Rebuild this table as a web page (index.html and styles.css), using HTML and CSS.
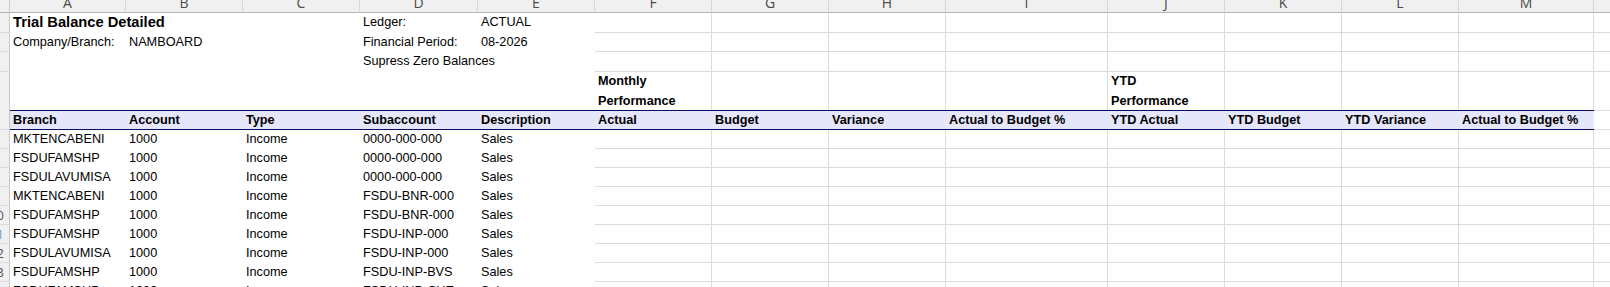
FILE: index.html
```html
<!DOCTYPE html>
<html>
<head>
<meta charset="utf-8">
<link rel="stylesheet" href="styles.css">
</head>
<body>
<div class="sheet">
  <div class="row r-ch">
    <div class="corner"></div>
    <div class="ch">A</div><div class="ch">B</div><div class="ch">C</div><div class="ch">D</div><div class="ch">E</div>
    <div class="ch">F</div><div class="ch">G</div><div class="ch">H</div><div class="ch">I</div><div class="ch">J</div>
    <div class="ch">K</div><div class="ch">L</div><div class="ch">M</div><div class="ch">N</div>
  </div>

  <div class="row r1">
    <div class="rh"></div>
    <div class="c title">Trial Balance Detailed</div><div class="c"></div><div class="c"></div>
    <div class="c">Ledger:</div><div class="c">ACTUAL</div>
    <div class="c g"></div><div class="c g"></div><div class="c g"></div><div class="c g"></div><div class="c g"></div>
    <div class="c g"></div><div class="c g"></div><div class="c g"></div><div class="c g"></div>
  </div>

  <div class="row r2">
    <div class="rh"></div>
    <div class="c">Company/Branch:</div><div class="c">NAMBOARD</div><div class="c"></div>
    <div class="c">Financial Period:</div><div class="c">08-2026</div>
    <div class="c g"></div><div class="c g"></div><div class="c g"></div><div class="c g"></div><div class="c g"></div>
    <div class="c g"></div><div class="c g"></div><div class="c g"></div><div class="c g"></div>
  </div>

  <div class="row r3">
    <div class="rh"></div>
    <div class="c"></div><div class="c"></div><div class="c"></div>
    <div class="c">Supress Zero Balances</div><div class="c"></div>
    <div class="c g"></div><div class="c g"></div><div class="c g"></div><div class="c g"></div><div class="c g"></div>
    <div class="c g"></div><div class="c g"></div><div class="c g"></div><div class="c g"></div>
  </div>

  <div class="row r4">
    <div class="rh"></div>
    <div class="c"></div><div class="c"></div><div class="c"></div><div class="c"></div><div class="c"></div>
    <div class="c g sec">Monthly<br>Performance</div><div class="c g"></div><div class="c g"></div><div class="c g"></div>
    <div class="c g sec">YTD<br>Performance</div><div class="c g"></div><div class="c g"></div><div class="c g"></div>
    <div class="c g last"></div>
  </div>

  <div class="row r5">
    <div class="rh"></div>
    <div class="c hd">Branch</div><div class="c hd">Account</div><div class="c hd">Type</div>
    <div class="c hd">Subaccount</div><div class="c hd">Description</div>
    <div class="c hd">Actual</div><div class="c hd">Budget</div><div class="c hd">Variance</div><div class="c hd">Actual to Budget %</div>
    <div class="c hd">YTD Actual</div><div class="c hd">YTD Budget</div><div class="c hd">YTD Variance</div><div class="c hd">Actual to Budget %</div>
    <div class="c g"></div>
  </div>

  <div class="row rd">
    <div class="rh"></div>
    <div class="c">MKTENCABENI</div><div class="c">1000</div><div class="c">Income</div><div class="c">0000-000-000</div><div class="c">Sales</div>
    <div class="c g"></div><div class="c g"></div><div class="c g"></div><div class="c g"></div><div class="c g"></div>
    <div class="c g"></div><div class="c g"></div><div class="c g"></div><div class="c g"></div>
  </div>
  <div class="row rd">
    <div class="rh"></div>
    <div class="c">FSDUFAMSHP</div><div class="c">1000</div><div class="c">Income</div><div class="c">0000-000-000</div><div class="c">Sales</div>
    <div class="c g"></div><div class="c g"></div><div class="c g"></div><div class="c g"></div><div class="c g"></div>
    <div class="c g"></div><div class="c g"></div><div class="c g"></div><div class="c g"></div>
  </div>
  <div class="row rd">
    <div class="rh"></div>
    <div class="c">FSDULAVUMISA</div><div class="c">1000</div><div class="c">Income</div><div class="c">0000-000-000</div><div class="c">Sales</div>
    <div class="c g"></div><div class="c g"></div><div class="c g"></div><div class="c g"></div><div class="c g"></div>
    <div class="c g"></div><div class="c g"></div><div class="c g"></div><div class="c g"></div>
  </div>
  <div class="row rd">
    <div class="rh"></div>
    <div class="c">MKTENCABENI</div><div class="c">1000</div><div class="c">Income</div><div class="c">FSDU-BNR-000</div><div class="c">Sales</div>
    <div class="c g"></div><div class="c g"></div><div class="c g"></div><div class="c g"></div><div class="c g"></div>
    <div class="c g"></div><div class="c g"></div><div class="c g"></div><div class="c g"></div>
  </div>
  <div class="row rd">
    <div class="rh">10</div>
    <div class="c">FSDUFAMSHP</div><div class="c">1000</div><div class="c">Income</div><div class="c">FSDU-BNR-000</div><div class="c">Sales</div>
    <div class="c g"></div><div class="c g"></div><div class="c g"></div><div class="c g"></div><div class="c g"></div>
    <div class="c g"></div><div class="c g"></div><div class="c g"></div><div class="c g"></div>
  </div>
  <div class="row rd">
    <div class="rh hl">11</div>
    <div class="c">FSDUFAMSHP</div><div class="c">1000</div><div class="c">Income</div><div class="c">FSDU-INP-000</div><div class="c">Sales</div>
    <div class="c g"></div><div class="c g"></div><div class="c g"></div><div class="c g"></div><div class="c g"></div>
    <div class="c g"></div><div class="c g"></div><div class="c g"></div><div class="c g"></div>
  </div>
  <div class="row rd">
    <div class="rh">12</div>
    <div class="c">FSDULAVUMISA</div><div class="c">1000</div><div class="c">Income</div><div class="c">FSDU-INP-000</div><div class="c">Sales</div>
    <div class="c g"></div><div class="c g"></div><div class="c g"></div><div class="c g"></div><div class="c g"></div>
    <div class="c g"></div><div class="c g"></div><div class="c g"></div><div class="c g"></div>
  </div>
  <div class="row rd">
    <div class="rh">13</div>
    <div class="c">FSDUFAMSHP</div><div class="c">1000</div><div class="c">Income</div><div class="c">FSDU-INP-BVS</div><div class="c">Sales</div>
    <div class="c g"></div><div class="c g"></div><div class="c g"></div><div class="c g"></div><div class="c g"></div>
    <div class="c g"></div><div class="c g"></div><div class="c g"></div><div class="c g"></div>
  </div>
  <div class="row rd">
    <div class="rh">14</div>
    <div class="c">FSDUFAMSHP</div><div class="c">1000</div><div class="c">Income</div><div class="c">FSDU-INP-CHE</div><div class="c">Sales</div>
    <div class="c g"></div><div class="c g"></div><div class="c g"></div><div class="c g"></div><div class="c g"></div>
    <div class="c g"></div><div class="c g"></div><div class="c g"></div><div class="c g"></div>
  </div>
</div>
</body>
</html>
```

FILE: styles.css
```css
html, body {
  margin: 0;
  padding: 0;
  background: #ffffff;
}

body {
  overflow: hidden;
  font-family: "Liberation Sans", Arial, sans-serif;
  font-size: 12.7px;
  color: #000000;
}

.sheet {
  width: 1610px;
  height: 287px;
  overflow: hidden;
}

.row {
  display: grid;
  grid-template-columns: 10px 116px 117px 117px 118px 117px 117px 117px 117px 162px 117px 117px 117px 135px 117px;
}

.r-ch { height: 13px; }
.r1 { height: 20px; }
.r2 { height: 19px; }
.r3 { height: 20px; }
.r4 { height: 38px; }
.r5 { height: 20px; }
.rd { height: 19px; }

/* column header strip */
.corner,
.ch {
  box-sizing: border-box;
  background: #f0f0f0;
  border-bottom: 1px solid #b4b4b4;
}

.corner {
  border-right: 1px solid #c8c8c8;
}

.ch {
  border-right: 1px solid #d6d6d6;
  text-align: center;
  font-family: "Open Sans", "Noto Sans", sans-serif;
  font-size: 14px;
  line-height: 5px;
  color: #4a4a4a;
}

/* row header strip */
.rh {
  box-sizing: border-box;
  background: #f0f0f0;
  border-right: 1px solid #c8c8c8;
  border-bottom: 1px solid #dadada;
  overflow: hidden;
  white-space: nowrap;
  direction: rtl;
  padding-right: 5px;
  font-family: "Open Sans", "Noto Sans", sans-serif;
  font-size: 13px;
  color: #555555;
  display: flex;
  align-items: center;
}

.rh.hl {
  color: #6f9fc4;
}

/* cells */
.c {
  box-sizing: border-box;
  padding-left: 3px;
  white-space: nowrap;
  border-bottom: 1px solid transparent;
}

.r1 .c { line-height: 19px; }
.r2 .c { line-height: 18px; }
.r3 .c { line-height: 19px; }
.rd .c { line-height: 18px; }

.r4 .c {
  border-bottom: 0;
  display: flex;
  align-items: flex-end;
  line-height: 19.5px;
}

.r4 .c.last {
  border-bottom: 1px solid #dcdcdc;
}

.g {
  border-right: 1px solid #dcdcdc;
  border-bottom: 1px solid #dcdcdc;
}

.title {
  font-size: 14.7px;
  font-weight: bold;
}

.sec {
  font-weight: bold;
}

.hd {
  background: #e6e6fa;
  border-top: 1px solid #0c0c5e;
  border-bottom: 1px solid #0c0c5e;
  font-weight: bold;
  line-height: 18px;
}

.r5 .c.g {
  line-height: 19px;
}
```
